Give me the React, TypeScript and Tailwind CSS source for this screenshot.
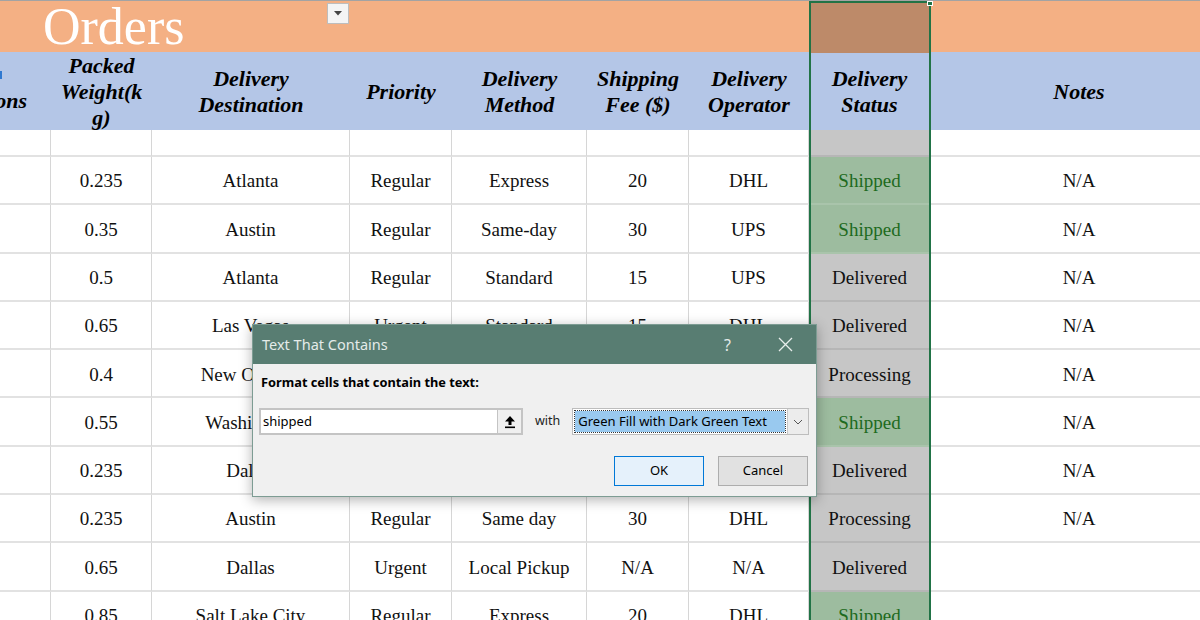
import React from 'react';

const COLS = 'grid grid-cols-[51px_101px_198px_102px_135px_102px_120px_121px_298px]';

type Row = {
  weight: string;
  dest: string;
  priority: string;
  method: string;
  fee: string;
  operator: string;
  status: string;
  notes: string;
};

const rows: Row[] = [
  { weight: '0.235', dest: 'Atlanta', priority: 'Regular', method: 'Express', fee: '20', operator: 'DHL', status: 'Shipped', notes: 'N/A' },
  { weight: '0.35', dest: 'Austin', priority: 'Regular', method: 'Same-day', fee: '30', operator: 'UPS', status: 'Shipped', notes: 'N/A' },
  { weight: '0.5', dest: 'Atlanta', priority: 'Regular', method: 'Standard', fee: '15', operator: 'UPS', status: 'Delivered', notes: 'N/A' },
  { weight: '0.65', dest: 'Las Vegas', priority: 'Urgent', method: 'Standard', fee: '15', operator: 'DHL', status: 'Delivered', notes: 'N/A' },
  { weight: '0.4', dest: 'New Orleans', priority: 'Regular', method: 'Express', fee: '20', operator: 'UPS', status: 'Processing', notes: 'N/A' },
  { weight: '0.55', dest: 'Washington', priority: 'Urgent', method: 'Same-day', fee: '30', operator: 'DHL', status: 'Shipped', notes: 'N/A' },
  { weight: '0.235', dest: 'Dallas', priority: 'Regular', method: 'Standard', fee: '15', operator: 'UPS', status: 'Delivered', notes: 'N/A' },
  { weight: '0.235', dest: 'Austin', priority: 'Regular', method: 'Same day', fee: '30', operator: 'DHL', status: 'Processing', notes: 'N/A' },
  { weight: '0.65', dest: 'Dallas', priority: 'Urgent', method: 'Local Pickup', fee: 'N/A', operator: 'N/A', status: 'Delivered', notes: '' },
  { weight: '0.85', dest: 'Salt Lake City', priority: 'Regular', method: 'Express', fee: '20', operator: 'DHL', status: 'Shipped', notes: '' },
];

function Cell({ children }: { children?: React.ReactNode }) {
  return (
    <div className="flex items-center justify-center pt-[3px] border-r border-b-2 border-r-[#d6d6d6] border-b-[#e2e2e2] whitespace-nowrap overflow-hidden">
      {children}
    </div>
  );
}

function StatusCell({ status }: { status: string }) {
  const shipped = status === 'Shipped';
  return (
    <div
      className={
        shipped
          ? 'flex items-center justify-center pt-[3px] border-b-2 border-[#a9c4ab] bg-[#9dbc9f] text-[#1d6a20]'
          : 'flex items-center justify-center pt-[3px] border-b-2 border-[#b6b6b6] bg-[#c6c6c6]'
      }
    >
      {status}
    </div>
  );
}

function Dialog() {
  return (
    <div className="absolute left-[252px] top-[323px] w-[565px] h-[173px] bg-[#f0f0f0] border border-[#7d9c93] shadow-[0_3px_12px_rgba(0,0,0,0.3)] font-['Noto_Sans',sans-serif] text-[12px] text-black">
      <div className="h-[39px] bg-[#587d72] flex items-center pl-[9px] pr-[20px]">
        <span className="text-[14.5px] text-[#e4ebe9]">Text That Contains</span>
        <span className="ml-auto text-[16px] text-[#e4ebe9] mr-[47px]">?</span>
        <svg width="15" height="15" viewBox="0 0 15 15" className="mr-[3px]">
          <path d="M1 1 L14 14 M14 1 L1 14" stroke="#e8eeec" strokeWidth="1.3" />
        </svg>
      </div>
      <div className="pt-[9px] pl-[8px] font-bold text-[12.8px]">Format cells that contain the text:</div>
      <div className="flex items-center mt-[16px] pl-[6px]">
        <div className="flex w-[264px] h-[27px] border-2 border-[#c4c4c4] bg-white">
          <div className="flex-1 flex items-center pl-[2px] text-[13px]">shipped</div>
          <div className="w-[24px] bg-[#f0f0f0] border-l border-[#c4c4c4] flex items-center justify-center">
            <svg width="12" height="14" viewBox="0 0 12 14">
              <path d="M6 1 L11 6.5 L7.5 6.5 L7.5 10 L4.5 10 L4.5 6.5 L1 6.5 Z" fill="#000" />
              <rect x="1" y="11.5" width="10" height="1.6" fill="#000" />
            </svg>
          </div>
        </div>
        <span className="ml-[12px] text-[12.5px] text-[#222]">with</span>
        <div className="ml-[12px] flex w-[237px] h-[27px] border border-[#bdbdbd] bg-white p-[2px]">
          <div className="flex-1 flex items-center bg-[#99c9ef] outline outline-1 outline-dotted outline-[#333] pl-[3px] text-[13px]">
            Green Fill with Dark Green Text
          </div>
          <div className="w-[21px] ml-[2px] -my-[2px] -mr-[2px] bg-[#ececec] border-l border-[#c8c8c8] flex items-center justify-center">
            <svg width="10" height="6" viewBox="0 0 10 6">
              <path d="M1 1 L5 5 L9 1" stroke="#555" strokeWidth="1" fill="none" />
            </svg>
          </div>
        </div>
      </div>
      <div className="flex justify-end gap-[14px] mt-[21px] pr-[8px]">
        <button className="w-[90px] h-[30px] bg-[#e5f1fb] border border-[#0078d7] text-[13px]">OK</button>
        <button className="w-[90px] h-[30px] bg-[#e1e1e1] border border-[#adadad] text-[13px]">Cancel</button>
      </div>
    </div>
  );
}

export default function App() {
  return (
    <div className="relative w-[1200px] h-[620px] overflow-hidden bg-white border-t border-[#a3a3a3] font-['Liberation_Serif',serif] text-[19px] text-[#111]">
      {/* title band */}
      <div className={`${COLS} h-[51px] bg-[#f4b084]`}>
        <div className="col-span-3 flex items-start">
          <span className="pl-[43px] text-[52px] leading-[52px] text-white whitespace-nowrap">Orders</span>
          <div className="ml-auto mr-[1px] mt-[2px] w-[22px] h-[21px] bg-[#f4f4f4] border border-[#bdbdbd] flex items-center justify-center">
            <svg width="8" height="5" viewBox="0 0 8 5">
              <path d="M0 0 L8 0 L4 4.5 Z" fill="#444" />
            </svg>
          </div>
        </div>
        <div className="col-span-4" />
        <div className="bg-[#bd8a69]" />
        <div />
      </div>

      {/* header */}
      <div className={`${COLS} h-[78px] bg-[#b4c6e7] pt-[1px] font-bold italic text-[22px] leading-[26px] text-black`}>
        <div className="flex flex-col items-end justify-center pr-[24px] overflow-hidden whitespace-nowrap">
          <span className="block w-[2px] h-[8px] bg-[#2f78d0] self-start mb-[9px]" />
          <span>Dimensions</span>
        </div>
        <div className="flex items-center justify-center text-center">Packed<br />Weight(k<br />g)</div>
        <div className="flex items-center justify-center text-center">Delivery<br />Destination</div>
        <div className="flex items-center justify-center text-center">Priority</div>
        <div className="flex items-center justify-center text-center">Delivery<br />Method</div>
        <div className="flex items-center justify-center text-center">Shipping<br />Fee ($)</div>
        <div className="flex items-center justify-center text-center">Delivery<br />Operator</div>
        <div className="flex items-center justify-center text-center -mt-[1px] pt-[1px] border-x border-[#dfe6f3] border-b border-b-[#9aa3b8]">Delivery<br />Status</div>
        <div className="flex items-center justify-center text-center">Notes</div>
      </div>

      {/* empty row */}
      <div className={`${COLS} h-[27px]`}>
        {Array.from({ length: 7 }).map((_, i) => (
          <Cell key={i} />
        ))}
        <div className="bg-[#c6c6c6] border-b-2 border-[#b6b6b6]" />
        <div className="border-b-2 border-[#e2e2e2]" />
      </div>

      {rows.map((r, i) => (
        <div key={i} className={`${COLS} h-[48.3px]`}>
          <Cell />
          <Cell>{r.weight}</Cell>
          <Cell>{r.dest}</Cell>
          <Cell>{r.priority}</Cell>
          <Cell>{r.method}</Cell>
          <Cell>{r.fee}</Cell>
          <Cell>{r.operator}</Cell>
          <StatusCell status={r.status} />
          <div className="flex items-center justify-center pt-[3px] border-b-2 border-[#e2e2e2]">{r.notes}</div>
        </div>
      ))}

      {/* selected column outline */}
      <div className="absolute left-[809px] top-0 w-[122px] h-[620px] border-2 border-b-0 border-[#217346]" />
      <div className="absolute left-[927px] top-0 w-[6px] h-[5px] bg-[#217346] border border-white" />

      <Dialog />
    </div>
  );
}
